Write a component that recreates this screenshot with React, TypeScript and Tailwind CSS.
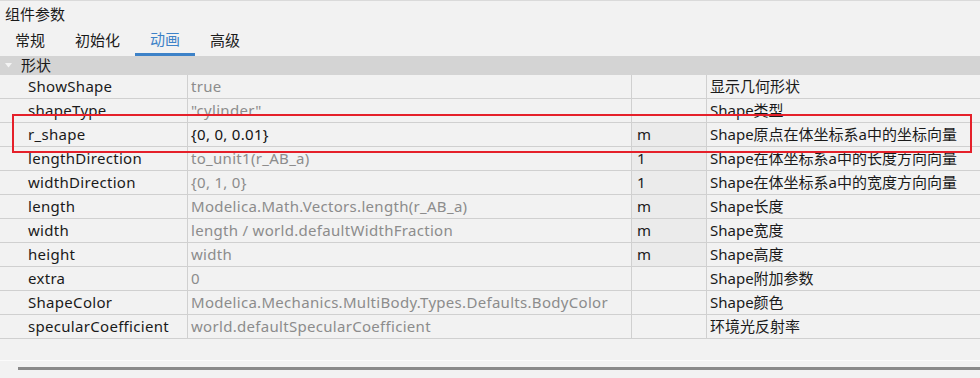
const rows: Array<{
  name: string;
  value: string;
  unit: string;
  desc: string;
  edited?: boolean;
}> = [
  { name: "ShowShape", value: "true", unit: "", desc: "显示几何形状" },
  { name: "shapeType", value: "\"cylinder\"", unit: "", desc: "Shape类型" },
  { name: "r_shape", value: "{0, 0, 0.01}", unit: "m", desc: "Shape原点在体坐标系a中的坐标向量", edited: true },
  { name: "lengthDirection", value: "to_unit1(r_AB_a)", unit: "1", desc: "Shape在体坐标系a中的长度方向向量" },
  { name: "widthDirection", value: "{0, 1, 0}", unit: "1", desc: "Shape在体坐标系a中的宽度方向向量" },
  { name: "length", value: "Modelica.Math.Vectors.length(r_AB_a)", unit: "m", desc: "Shape长度" },
  { name: "width", value: "length / world.defaultWidthFraction", unit: "m", desc: "Shape宽度" },
  { name: "height", value: "width", unit: "m", desc: "Shape高度" },
  { name: "extra", value: "0", unit: "", desc: "Shape附加参数" },
  { name: "ShapeColor", value: "Modelica.Mechanics.MultiBody.Types.Defaults.BodyColor", unit: "", desc: "Shape颜色" },
  { name: "specularCoefficient", value: "world.defaultSpecularCoefficient", unit: "", desc: "环境光反射率" }
];

const tabs = ["常规", "初始化", "动画", "高级"];

export default function App() {
  return (
    <div
      className="relative h-[378px] w-[980px] overflow-hidden border-t border-[#dadada] bg-[#f2f2f2] text-[15px] text-[#1a1a1a]"
      style={{ fontFamily: '"Noto Sans", "Noto Sans CJK SC", sans-serif' }}
    >
      <div className="flex h-[26px] items-center pl-[5px] leading-none">组件参数</div>
      <div className="flex h-[29px] items-end">
        {tabs.map((tab) => {
          const active = tab === "动画";
          return (
            <div
              key={tab}
              className={`flex h-[28px] items-center px-[15px] pb-[3px] leading-none ${
                active ? "border-b-[3px] border-[#3d82c8] pb-0 text-[#3d82c8]" : ""
              }`}
            >
              {tab}
            </div>
          );
        })}
      </div>
      <div className="flex h-[19px] items-center bg-[#d4d4d4] leading-none">
        <svg className="ml-[5px] mr-[9px]" width="7" height="5" viewBox="0 0 7 5">
          <path d="M0 0 H7 L3.5 4.5 Z" fill="#f4f4f4" />
        </svg>
        <span>形状</span>
      </div>
      <div className="tracking-[0.3px]">
        {rows.map((row) => (
          <div key={row.name} className="flex h-[24px] border-b border-[#d0d0d0] leading-none">
            <div className="flex w-[188px] items-center border-r border-[#d0d0d0] pl-[28px]">{row.name}</div>
            <div
              className={`flex w-[444px] items-center border-r border-[#d0d0d0] pl-[3px] ${
                row.edited ? "text-[#111]" : "text-[#8c8c8c]"
              }`}
            >
              {row.value}
            </div>
            <div
              className={`flex w-[75px] items-center border-r border-[#d0d0d0] pl-[5px] ${
                row.unit ? "bg-[#ebebeb]" : ""
              }`}
            >
              {row.unit}
            </div>
            <div className="flex flex-1 items-center whitespace-nowrap pl-[3px] tracking-normal">{row.desc}</div>
          </div>
        ))}
      </div>
      <div className="mt-[21px] h-px bg-[#fbfbfb]" />
      <div className="ml-[18px] mt-[6px] h-[3px] bg-[#8a8a8a]" />
      <div className="pointer-events-none absolute left-[12px] top-[113px] h-[39px] w-[960px] border-2 border-[#e5202a]" />
    </div>
  );
}
